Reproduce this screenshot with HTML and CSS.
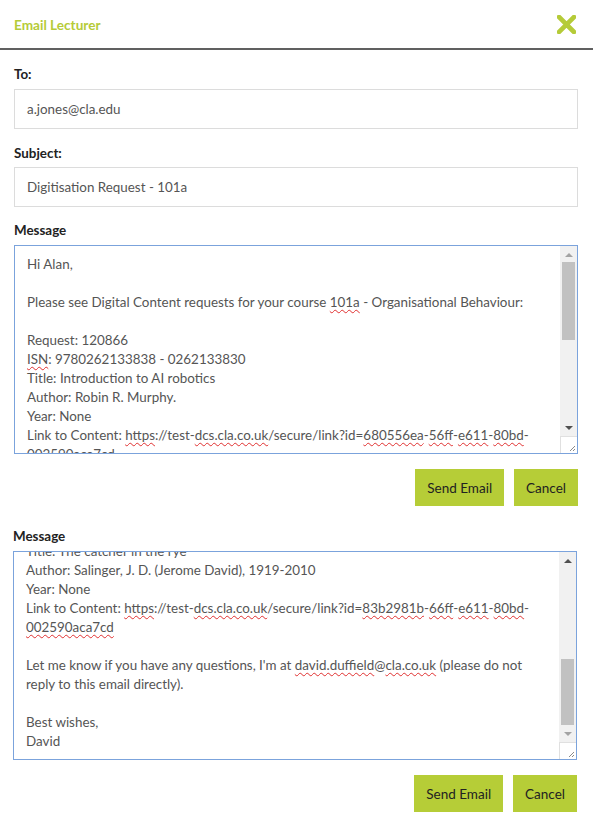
FILE: index.html
```html
<!DOCTYPE html>
<html>
<head>
<meta charset="utf-8">
<link rel="stylesheet" href="styles.css">
</head>
<body>
<div class="modal">
  <div class="header">
    <div class="title">Email Lecturer</div>
    <svg class="close" width="19" height="19" viewBox="0 0 19 19">
      <path d="M2 2 L17 17 M17 2 L2 17" stroke="#b5cb38" stroke-width="4.6" stroke-linecap="square" fill="none"/>
    </svg>
  </div>
  <div class="body">
    <div class="label first">To:</div>
    <div class="input">a.jones@cla.edu</div>
    <div class="label subj">Subject:</div>
    <div class="input">Digitisation Request - 101a</div>
    <div class="label msg">Message</div>
    <div class="ta">
      <div class="ta-text">
        <div class="ln">Hi Alan,</div>
        <div class="ln">&nbsp;</div>
        <div class="ln">Please see Digital Content requests for your course <span class="sp">101a</span> - Organisational Behaviour:</div>
        <div class="ln">&nbsp;</div>
        <div class="ln">Request: 120866</div>
        <div class="ln"><span class="sp">ISN</span>: 9780262133838 - 0262133830</div>
        <div class="ln">Title: Introduction to AI robotics</div>
        <div class="ln">Author: Robin R. Murphy.</div>
        <div class="ln">Year: None</div>
        <div class="ln">Link to Content: <span class="sp">https</span>://test-<span class="sp">dcs.cla.co.uk</span>/secure/link?id=<span class="sp">680556ea</span>-<span class="sp">56ff</span>-<span class="sp">e611</span>-<span class="sp">80bd</span>-</div>
        <div class="ln"><span class="sp">002590aca7cd</span></div>
        <div class="ln">&nbsp;</div>
      </div>
      <div class="sb">
        <div class="sb-btn"><span class="arr up light"></span></div>
        <div class="sb-track"><div class="thumb t1"></div></div>
        <div class="sb-btn"><span class="arr down dark"></span></div>
        <div class="resizer">
          <svg width="16" height="16" viewBox="0 0 16 16"><path d="M14 9 L9 14 M14 12 L12 14" stroke="#8a8a8a" stroke-width="1" fill="none"/></svg>
        </div>
      </div>
    </div>
    <div class="actions">
      <button class="btn">Send Email</button>
      <button class="btn">Cancel</button>
    </div>
  </div>
  <div class="body shifted">
    <div class="label msg2">Message</div>
    <div class="ta">
      <div class="ta-text bottom">
        <div class="ln">Title: The catcher in the rye</div>
        <div class="ln">Author: Salinger, J. D. (Jerome David), 1919-2010</div>
        <div class="ln">Year: None</div>
        <div class="ln">Link to Content: <span class="sp">https</span>://test-<span class="sp">dcs.cla.co.uk</span>/secure/link?id=<span class="sp">83b2981b</span>-<span class="sp">66ff</span>-<span class="sp">e611</span>-<span class="sp">80bd</span>-</div>
        <div class="ln"><span class="sp">002590aca7cd</span></div>
        <div class="ln">&nbsp;</div>
        <div class="ln">Let me know if you have any questions, I'm at <span class="sp">david.duffield</span>@<span class="sp">cla.co.uk</span> (please do not</div>
        <div class="ln">reply to this email directly).</div>
        <div class="ln">&nbsp;</div>
        <div class="ln">Best wishes,</div>
        <div class="ln">David</div>
      </div>
      <div class="sb">
        <div class="sb-btn"><span class="arr up dark"></span></div>
        <div class="sb-track end"><div class="thumb t2"></div></div>
        <div class="sb-btn"><span class="arr down light"></span></div>
        <div class="resizer">
          <svg width="16" height="16" viewBox="0 0 16 16"><path d="M14 9 L9 14 M14 12 L12 14" stroke="#8a8a8a" stroke-width="1" fill="none"/></svg>
        </div>
      </div>
    </div>
    <div class="actions">
      <button class="btn">Send Email</button>
      <button class="btn">Cancel</button>
    </div>
  </div>
</div>
</body>
</html>
```
FILE: styles.css
```css
* { box-sizing: border-box; }
body {
  margin: 0;
  background: #fff;
  font-family: Lato, "Liberation Sans", sans-serif;
  font-size: 13.4px;
  color: #555;
}
.modal { width: 593px; }
.header {
  height: 50px;
  border-bottom: 2px solid #606060;
  display: flex;
  align-items: center;
  justify-content: space-between;
  padding: 0 17px 0 14px;
}
.title {
  color: #b5cb38;
  font-weight: bold;
  font-size: 13.6px;
  padding-top: 1px;
}
.close { display: block; margin-top: 1px; }
.body { padding: 0 15px 0 14px; }
.body.shifted { padding: 0 16px 0 13px; }
.label {
  font-weight: bold;
  color: #222;
  line-height: 18px;
  margin: 15px 0 6px;
}
.label.subj { margin: 15px 0 5px; }
.label.msg { margin: 14px 0 6px; }
.label.msg2 { margin: 21px 0 6px; }
.input {
  height: 40px;
  border: 1px solid #dcdcdc;
  padding-left: 12px;
  line-height: 38px;
  color: #555;
}
.ta {
  height: 209px;
  border: 1px solid #7ba3dc;
  display: flex;
}
.ta-text {
  flex: 1;
  overflow: hidden;
  padding: 9px 12px 0;
  display: flex;
  flex-direction: column;
}
.ta-text.bottom {
  justify-content: flex-end;
  padding: 0 12px 8px;
}
.ln {
  line-height: 19px;
  white-space: nowrap;
  flex: none;
}
.sp {
  text-decoration: underline wavy #e03030;
  text-decoration-thickness: 1px;
  text-underline-offset: 2px;
  text-decoration-skip-ink: none;
}
.sb {
  width: 17px;
  display: flex;
  flex-direction: column;
  background: #f1f1f1;
}
.sb-btn {
  height: 17px;
  display: flex;
  align-items: center;
  justify-content: center;
}
.arr { width: 0; height: 0; border-left: 4px solid transparent; border-right: 4px solid transparent; }
.arr.up.light { border-bottom: 4px solid #a3a3a3; }
.arr.up.dark { border-bottom: 4px solid #505050; }
.arr.down.light { border-top: 4px solid #a3a3a3; }
.arr.down.dark { border-top: 4px solid #505050; }
.sb-track {
  flex: 1;
  display: flex;
  flex-direction: column;
  align-items: center;
}
.sb-track.end { justify-content: flex-end; }
.thumb { width: 13px; background: #c1c1c1; }
.thumb.t1 { height: 78px; margin-top: -1px; }
.thumb.t2 { height: 66px; }
.resizer {
  height: 17px;
  background: #fff;
  border-left: 1px solid #e0e0e0;
  border-top: 1px solid #e0e0e0;
}
.resizer svg { display: block; }
.actions {
  display: flex;
  justify-content: flex-end;
  gap: 10px;
  margin-top: 15px;
}
.btn {
  height: 37px;
  border: 0;
  background: #b6cd37;
  color: #222;
  font-family: Lato, "Liberation Sans", sans-serif;
  font-size: 13.5px;
  padding: 0 12px;
  margin: 0;
}
```
